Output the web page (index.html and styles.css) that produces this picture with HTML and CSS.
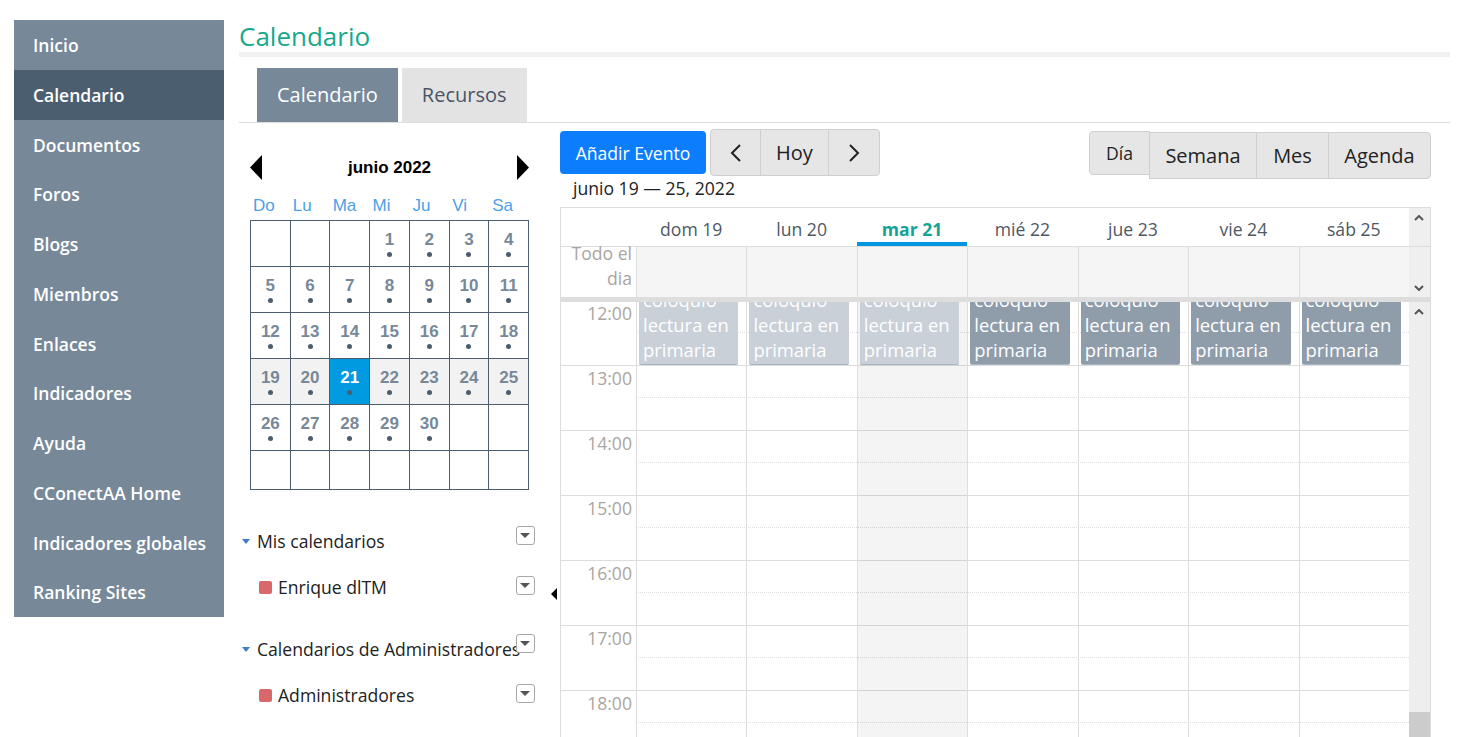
FILE: index.html
```html
<!DOCTYPE html>
<html lang="es">
  <head>
    <meta charset="utf-8">
    <link rel="stylesheet" href="styles.css">
    <title>Calendario</title>
  </head>
  <body>
    <div class="page">
      <nav class="sidebar">
        <a class="sidebar__item">Inicio</a>
        <a class="sidebar__item sidebar__item--active">Calendario</a>
        <a class="sidebar__item">Documentos</a>
        <a class="sidebar__item">Foros</a>
        <a class="sidebar__item">Blogs</a>
        <a class="sidebar__item">Miembros</a>
        <a class="sidebar__item">Enlaces</a>
        <a class="sidebar__item">Indicadores</a>
        <a class="sidebar__item">Ayuda</a>
        <a class="sidebar__item">CConectAA Home</a>
        <a class="sidebar__item">Indicadores globales</a>
        <a class="sidebar__item">Ranking Sites</a>
      </nav>

      <main class="main">
        <h1 class="main__title">Calendario</h1>
        <div class="tabs">
          <span class="tab tab--active">Calendario</span>
          <span class="tab">Recursos</span>
        </div>

        <div class="content">
          <aside class="side">
            <div class="mini-cal">
              <div class="mini-cal__head">
                <svg width="12" height="25" viewBox="0 0 12 25"><polygon points="12,0 12,25 0,12.5"/></svg>
                <span class="mini-cal__title">junio 2022</span>
                <svg width="12" height="25" viewBox="0 0 12 25"><polygon points="0,0 0,25 12,12.5"/></svg>
              </div>
              <div class="mini-cal__weekdays">
                <span>Do</span><span>Lu</span><span>Ma</span><span>Mi</span><span>Ju</span><span>Vi</span><span>Sa</span>
              </div>
              <div class="mini-cal__days">
                <span class="day"></span>
                <span class="day"></span>
                <span class="day"></span>
                <span class="day">1<i class="day__dot"></i></span>
                <span class="day">2<i class="day__dot"></i></span>
                <span class="day">3<i class="day__dot"></i></span>
                <span class="day">4<i class="day__dot"></i></span>

                <span class="day">5<i class="day__dot"></i></span>
                <span class="day">6<i class="day__dot"></i></span>
                <span class="day">7<i class="day__dot"></i></span>
                <span class="day">8<i class="day__dot"></i></span>
                <span class="day">9<i class="day__dot"></i></span>
                <span class="day">10<i class="day__dot"></i></span>
                <span class="day">11<i class="day__dot"></i></span>

                <span class="day">12<i class="day__dot"></i></span>
                <span class="day">13<i class="day__dot"></i></span>
                <span class="day">14<i class="day__dot"></i></span>
                <span class="day">15<i class="day__dot"></i></span>
                <span class="day">16<i class="day__dot"></i></span>
                <span class="day">17<i class="day__dot"></i></span>
                <span class="day">18<i class="day__dot"></i></span>

                <span class="day day--week">19<i class="day__dot"></i></span>
                <span class="day day--week">20<i class="day__dot"></i></span>
                <span class="day day--today">21<i class="day__dot"></i></span>
                <span class="day day--week">22<i class="day__dot"></i></span>
                <span class="day day--week">23<i class="day__dot"></i></span>
                <span class="day day--week">24<i class="day__dot"></i></span>
                <span class="day day--week">25<i class="day__dot"></i></span>

                <span class="day">26<i class="day__dot"></i></span>
                <span class="day">27<i class="day__dot"></i></span>
                <span class="day">28<i class="day__dot"></i></span>
                <span class="day">29<i class="day__dot"></i></span>
                <span class="day">30<i class="day__dot"></i></span>
                <span class="day"></span>
                <span class="day"></span>

                <span class="day"></span>
                <span class="day"></span>
                <span class="day"></span>
                <span class="day"></span>
                <span class="day"></span>
                <span class="day"></span>
                <span class="day"></span>
              </div>
            </div>

            <div class="cal-lists">
              <div class="cal-group">
                <div class="cal-row cal-row--head">
                  <span class="caret"></span>Mis calendarios
                  <span class="menu-btn"></span>
                </div>
                <div class="cal-row cal-row--item">
                  <span class="swatch"></span>Enrique dlTM
                  <span class="menu-btn"></span>
                </div>
              </div>
              <div class="cal-group">
                <div class="cal-row cal-row--head">
                  <span class="caret"></span>Calendarios de Administradores
                  <span class="menu-btn"></span>
                </div>
                <div class="cal-row cal-row--item">
                  <span class="swatch"></span>Administradores
                  <span class="menu-btn"></span>
                </div>
              </div>
            </div>
          </aside>

          <div class="collapse"><span class="collapse__arrow"></span></div>

          <section class="cal">
            <div class="cal__toolbar">
              <button class="btn-add">Añadir Evento</button>
              <div class="btn-group">
                <button class="btn btn--prev">
                  <svg width="12" height="20" viewBox="0 0 12 20"><polyline points="10,2 2,10 10,18"/></svg>
                </button>
                <button class="btn btn--today">Hoy</button>
                <button class="btn btn--next">
                  <svg width="12" height="20" viewBox="0 0 12 20"><polyline points="2,2 10,10 2,18"/></svg>
                </button>
              </div>
              <div class="btn-group btn-group--views">
                <button class="btn btn--day">Día</button>
                <button class="btn btn--view btn--week">Semana</button>
                <button class="btn btn--view btn--month">Mes</button>
                <button class="btn btn--view btn--agenda">Agenda</button>
              </div>
            </div>
            <h2 class="cal__range">junio 19 — 25, 2022</h2>

            <div class="cal__grid">
              <div class="cal__head">
                <span></span>
                <span class="cal__label">dom 19</span>
                <span class="cal__label">lun 20</span>
                <span class="cal__label cal__label--today">mar 21</span>
                <span class="cal__label">mié 22</span>
                <span class="cal__label">jue 23</span>
                <span class="cal__label">vie 24</span>
                <span class="cal__label">sáb 25</span>
                <span class="cal__scroll-cell">
                  <svg class="chev chev--top" width="10" height="6" viewBox="0 0 10 6"><polyline points="1,5 5,1 9,5"/></svg>
                </span>
              </div>

              <div class="cal__allday">
                <span class="cal__allday-label">Todo el<br>dia</span>
                <span class="cal__allday-cell"></span>
                <span class="cal__allday-cell"></span>
                <span class="cal__allday-cell"></span>
                <span class="cal__allday-cell"></span>
                <span class="cal__allday-cell"></span>
                <span class="cal__allday-cell"></span>
                <span class="cal__allday-cell"></span>
                <span class="cal__scroll-cell">
                  <svg class="chev chev--bottom" width="10" height="6" viewBox="0 0 10 6"><polyline points="1,1 5,5 9,1"/></svg>
                </span>
              </div>

              <div class="cal__sep"></div>

              <div class="cal__body">
                <div class="cal__slots">
                  <div class="slat"><span class="slat__time">12:00</span><span class="slat__lane"><i class="slat__half"></i></span></div>
                  <div class="slat"><span class="slat__time">13:00</span><span class="slat__lane"><i class="slat__half"></i></span></div>
                  <div class="slat"><span class="slat__time">14:00</span><span class="slat__lane"><i class="slat__half"></i></span></div>
                  <div class="slat"><span class="slat__time">15:00</span><span class="slat__lane"><i class="slat__half"></i></span></div>
                  <div class="slat"><span class="slat__time">16:00</span><span class="slat__lane"><i class="slat__half"></i></span></div>
                  <div class="slat"><span class="slat__time">17:00</span><span class="slat__lane"><i class="slat__half"></i></span></div>
                  <div class="slat"><span class="slat__time">18:00</span><span class="slat__lane"><i class="slat__half"></i></span></div>

                  <div class="cal__cols">
                    <div class="cal__col"><div class="event event--past">coloquio lectura en primaria</div></div>
                    <div class="cal__col"><div class="event event--past">coloquio lectura en primaria</div></div>
                    <div class="cal__col cal__col--today"><div class="event event--past">coloquio lectura en primaria</div></div>
                    <div class="cal__col"><div class="event">coloquio lectura en primaria</div></div>
                    <div class="cal__col"><div class="event">coloquio lectura en primaria</div></div>
                    <div class="cal__col"><div class="event">coloquio lectura en primaria</div></div>
                    <div class="cal__col"><div class="event">coloquio lectura en primaria</div></div>
                  </div>
                </div>
                <div class="cal__scroll">
                  <svg class="chev chev--top" width="10" height="6" viewBox="0 0 10 6"><polyline points="1,5 5,1 9,5"/></svg>
                  <span class="cal__thumb"></span>
                </div>
              </div>
            </div>
          </section>
        </div>
      </main>
    </div>
  </body>
</html>
```

FILE: styles.css
```css
* { box-sizing: border-box; }
html, body { overflow: hidden; }
body {
  margin: 0;
  font-family: "Open Sans", "Liberation Sans", sans-serif;
  color: #222;
}

.page {
  display: flex;
  align-items: flex-start;
  gap: 15px;
  padding: 20px 22px 0 14px;
}

/* left navigation */
.sidebar {
  flex: 0 0 210px;
  background: #778899;
}
.sidebar__item {
  display: block;
  height: 49.75px;
  line-height: 51px;
  padding-left: 19px;
  color: #fff;
  font-size: 17.5px;
  font-weight: 600;
}
.sidebar__item--active { background: #4b5e6f; }

.main { flex: 1; min-width: 0; }
.main__title {
  margin: 0;
  font-size: 26px;
  font-weight: 400;
  line-height: 32px;
  color: #17a88b;
  border-bottom: 5px solid #f1f1f1;
}

.tabs {
  display: flex;
  gap: 4px;
  margin-top: 11px;
  padding-left: 18px;
  border-bottom: 1px solid #ddd;
}
.tab {
  height: 54px;
  line-height: 54px;
  padding: 0 20px;
  font-size: 20px;
  background: #e3e3e3;
  color: #4a5565;
}
.tab--active { background: #778899; color: #fff; }

.content { display: flex; align-items: flex-start; }

/* mini calendar */
.side { flex: 0 0 309px; }
.mini-cal { width: 279px; margin: 32px 0 0 11px; }
.mini-cal__head {
  display: flex;
  align-items: center;
  justify-content: space-between;
  height: 25px;
}
.mini-cal__head svg { fill: #000; }
.mini-cal__title {
  font: bold 17px "Liberation Sans", Arial, sans-serif;
  color: #000;
}
.mini-cal__weekdays {
  display: grid;
  grid-template-columns: repeat(7, 1fr);
  margin-top: 14px;
  height: 24px;
  font: 17px/24px "Liberation Sans", Arial, sans-serif;
  color: #4d9fe6;
}
.mini-cal__weekdays span { padding-left: 3px; }
.mini-cal__days {
  display: grid;
  grid-template-columns: repeat(7, 1fr);
  grid-template-rows: repeat(5, 46px) 39px;
  margin-top: 2px;
  border-top: 1px solid #4b5d6e;
  border-left: 1px solid #4b5d6e;
}
.day {
  display: flex;
  flex-direction: column;
  align-items: center;
  padding-top: 9px;
  border-right: 1px solid #4b5d6e;
  border-bottom: 1px solid #4b5d6e;
  font: bold 17px/20px "Liberation Sans", Arial, sans-serif;
  color: #778899;
}
.day__dot {
  width: 5px;
  height: 5px;
  margin-top: 2px;
  border-radius: 50%;
  background: #4b5d6e;
}
.day--week { background: #f2f2f2; }
.day--today { background: #009ae1; color: #fff; }

/* calendar lists */
.cal-lists { margin-top: 38px; padding-left: 3px; }
.cal-group + .cal-group { margin-top: 36px; }
.cal-row {
  position: relative;
  display: flex;
  align-items: center;
  gap: 7px;
  height: 26px;
  font-size: 17.6px;
  white-space: nowrap;
}
.cal-row + .cal-row { margin-top: 20px; }
.cal-row--item { padding-left: 17px; gap: 6px; }
.caret {
  width: 0;
  height: 0;
  border-left: 4.5px solid transparent;
  border-right: 4.5px solid transparent;
  border-top: 5px solid #3d7cc9;
}
.swatch {
  width: 13px;
  height: 13px;
  border-radius: 2px;
  background: #d9686a;
}
.menu-btn {
  position: absolute;
  right: 13px;
  width: 19px;
  height: 19px;
  border: 1px solid #a8a8a8;
  border-radius: 3px;
  background: #fff;
}
.menu-btn::after {
  content: "";
  position: absolute;
  left: 3px;
  top: 6px;
  border-left: 5px solid transparent;
  border-right: 5px solid transparent;
  border-top: 5px solid #555;
}
.cal-row--head .menu-btn { top: -2px; }
.cal-row--item .menu-btn { top: 2px; }

.collapse { flex: 0 0 12px; padding: 465px 0 0 3px; }
.collapse__arrow {
  display: block;
  width: 0;
  height: 0;
  border-top: 6px solid transparent;
  border-bottom: 6px solid transparent;
  border-right: 6px solid #000;
}

/* week calendar */
.cal { flex: 0 0 871px; padding-top: 6px; }
.cal__toolbar { display: flex; align-items: center; height: 47px; }
button { font-family: inherit; cursor: pointer; }
.btn-add {
  width: 146px;
  height: 43px;
  padding: 0;
  border: 0;
  border-radius: 4px;
  background: #0b7dfd;
  color: #fff;
  font-size: 17.6px;
}
.btn-group { display: flex; margin-left: 4px; }
.btn {
  height: 47px;
  padding: 0;
  border: 1px solid #cfcfcf;
  background: #e6e6e6;
  color: #222;
  font-size: 20px;
}
.btn + .btn { margin-left: -1px; }
.btn:first-child { border-radius: 4px 0 0 4px; }
.btn:last-child { border-radius: 0 4px 4px 0; }
.btn svg { display: block; margin: 0 auto; fill: none; stroke: #222; stroke-width: 2; }
.btn--prev { width: 51px; }
.btn--today { width: 69px; }
.btn--next { width: 52px; }

.btn-group--views { margin-left: auto; align-self: flex-start; }
.btn--day { width: 61px; height: 44px; margin-top: 2px; font-size: 17.6px; }
.btn--view { height: 47px; margin-top: 3px; }
.btn--week { width: 108px; }
.btn--month { width: 73px; }
.btn--agenda { width: 103px; }

.cal__range {
  margin: 0;
  padding-left: 13px;
  font-size: 17.6px;
  font-weight: 400;
  line-height: 24px;
}

.cal__grid {
  margin-top: 7px;
  border: 1px solid #ddd;
  border-bottom: 0;
}
.cal__head, .cal__allday {
  display: grid;
  grid-template-columns: 75px repeat(7, 1fr) 21px;
  grid-template-rows: 100%;
}
.cal__head { height: 38px; }
.cal__label {
  padding-top: 9px;
  line-height: 25px;
  text-align: center;
  font-size: 17.6px;
  color: #4d5865;
}
.cal__label--today {
  font-weight: 700;
  color: #14a398;
  border-bottom: 4px solid #0096e0;
}
.cal__scroll-cell { position: relative; background: #efefef; }
.chev { position: absolute; left: 5px; fill: none; stroke: #555; stroke-width: 2; }
.chev--top { top: 7px; }
.chev--bottom { bottom: 6px; }

.cal__allday { height: 51px; border-top: 1px solid #ddd; }
.cal__allday-label {
  display: flex;
  align-items: flex-end;
  justify-content: flex-end;
  min-height: 0;
  padding: 0 4px 6px 0;
  text-align: right;
  font-size: 17.6px;
  line-height: 25px;
  color: #aaa5a0;
}
.cal__allday-cell { background: #f5f5f5; border-left: 1px solid #ddd; }

.cal__sep { height: 5px; background: #ddd; }

.cal__body {
  display: grid;
  grid-template-columns: 1fr 21px;
  height: 450px;
  overflow: hidden;
}
.cal__slots { position: relative; }
.slat {
  display: flex;
  height: 65px;
  border-bottom: 1px solid #ddd;
}
.slat:first-child { margin-top: -1px; }
.slat__time {
  flex: 0 0 75px;
  padding-right: 4px;
  text-align: right;
  font-size: 17.6px;
  line-height: 24px;
  color: #aaa5a0;
}
.slat__lane { flex: 1; }
.slat__half {
  display: block;
  height: 32px;
  border-bottom: 1px dotted #ddd;
}

.cal__cols {
  position: absolute;
  top: 0;
  bottom: 0;
  left: 75px;
  right: 0;
  display: grid;
  grid-template-columns: repeat(7, 1fr);
}
.cal__col { position: relative; border-left: 1px solid #ddd; }
.cal__col--today { background: rgba(0, 0, 0, 0.045); }

.event {
  position: absolute;
  top: -15px;
  left: 2px;
  right: 8px;
  height: 77px;
  padding: 0 4px;
  border-radius: 2px;
  background: #8f9dab;
  box-shadow: 0 1px 0 #aab4be;
  color: #fff;
  font-size: 18.4px;
  line-height: 25px;
}
.event--past { background: #c9d0d8; }

.cal__scroll { position: relative; background: #eee; }
.cal__thumb {
  position: absolute;
  left: 0;
  right: 0;
  top: 410px;
  height: 40px;
  background: #ccc;
}
```
